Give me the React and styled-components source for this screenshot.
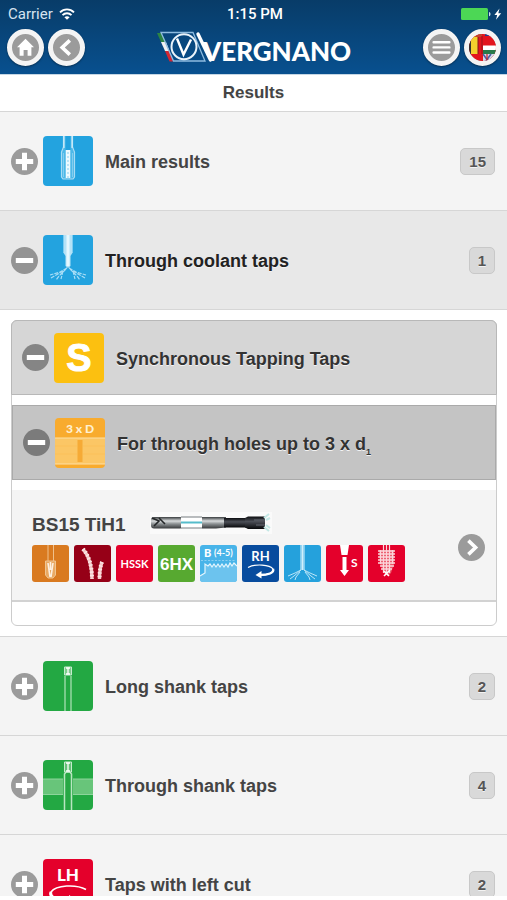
import React from 'react';
import styled, { createGlobalStyle } from 'styled-components';

const GlobalStyle = createGlobalStyle`
    * {
        box-sizing: border-box;
    }
    body {
        margin: 0;
        background: #fff;
        color: #444;
        font-family: "Liberation Sans", Arial, sans-serif;
        text-shadow: 0 1px 0 #f3f3f3;
    }
    button {
        font: inherit;
        color: inherit;
        text-shadow: inherit;
        cursor: pointer;
    }
`;

/* header icons */

const WifiIcon = () => (
  <svg width="16" height="12" viewBox="0 0 16 12" fill="none" stroke="#fff" strokeWidth="1.9" aria-hidden="true">
    <path d="M1 4.4 C5 .4 11 .4 15 4.4" />
    <path d="M3.5 7.1 C6 4.7 10 4.7 12.5 7.1" />
    <path d="M8 11.8 L5.4 9.2 C6.8 7.9 9.2 7.9 10.6 9.2 Z" fill="#fff" stroke="none" />
  </svg>
);

const BatteryIcon = () => (
  <svg width="42" height="14" viewBox="0 0 42 14" aria-hidden="true">
    <rect x="1" y="1" width="27" height="12" rx="1.5" fill="#4cd755" />
    <path d="M29 5 C31 5.4 31 8.8 29 9.2 Z" fill="#cfe0ee" />
    <path d="M39.5 1.5 L34.4 8 H37.2 L36 12.8 L41.2 6.2 H38.3 Z" fill="#fff" />
  </svg>
);

const HomeIcon = () => (
  <svg width="27" height="27" viewBox="0 0 27 27" fill="#fff" aria-hidden="true">
    <path d="M13.5 4.8 L22 13.2 H19.4 V21.8 H15.6 V16 H11.6 V21.8 H7.6 V13.2 H5 Z" />
  </svg>
);

const BackIcon = () => (
  <svg width="27" height="27" viewBox="0 0 27 27" fill="none" stroke="#fff" strokeWidth="3.6" aria-hidden="true">
    <path d="M16.8 6.4 L9.2 13.5 L16.8 20.6" />
  </svg>
);

const MenuIcon = () => (
  <svg width="27" height="27" viewBox="0 0 27 27" stroke="#fff" strokeWidth="2.4" strokeLinecap="round" aria-hidden="true">
    <path d="M5.6 8.3 H21.4 M5.6 13.4 H21.4 M5.6 18.5 H21.4" />
  </svg>
);

const FlagsIcon = () => (
  <svg width="27" height="27" viewBox="0 0 27 27" aria-hidden="true">
    <clipPath id="flags"><circle cx="13.5" cy="13.5" r="13.5" /></clipPath>
    <g clipPath="url(#flags)">
      <rect width="27" height="27" fill="#e3141d" />
      <rect width="2" height="27" fill="#333" />
      <rect x="2" y="2" width="7" height="18" fill="#f3cf2d" />
      <path d="M9 0 V20" stroke="#7e1a1c" />
      <path d="M3 0 H13 V3 H6 Z" fill="#c4422c" />
      <path d="M16 0 H27 V5 L22 2 L16 2 Z" fill="#1d3f94" />
      <path d="M13 2 V20" stroke="#a3131c" strokeWidth="1.2" />
      <rect x="14" y="11.500" width="13" height="4.500" fill="#fff" />
      <rect x="14" y="16" width="13" height="4" fill="#28794a" />
      <path d="M14 20 H27 V27 H14 Z" fill="#d5daea" />
      <path d="M14 20 L19 27 M22 20 L17 27" stroke="#4d5da8" strokeWidth="1.600" />
      <path d="M18 20 V27" stroke="#d21f26" strokeWidth="1.200" />
    </g>
  </svg>
);

const Logo = () => (
  <svg width="196" height="36" viewBox="0 0 196 36" role="img" aria-label="Vergnano">
    <path d="M1 3 H5.500 L10 12 H5 Z" fill="#2c8443" />
    <path d="M5 12 H10 L13.500 21 H9 Z" fill="#f2f2f2" />
    <path d="M9 21 H13.500 L17 31.500 H13.500 Z" fill="#d32632" />
    <path d="M5 2.500 H37 L49 31 H17.500 Z" fill="none" stroke="#8dbbdf" strokeWidth="1.300" />
    <circle cx="28" cy="16.700" r="12.500" fill="none" stroke="#eaf3fa" strokeWidth="2" />
    <path d="M21 8.500 L27.500 24.500 L35 9.500" fill="none" stroke="#fff" strokeWidth="2.400" />
    <path d="M42 4 L54.500 30" stroke="#fff" strokeWidth="3.400" strokeLinecap="round" />
    <text x="47" y="31" fill="#fff" fontFamily="Lato, sans-serif" fontSize="26" fontWeight="900">VERGNANO</text>
  </svg>
);

/* round toggles */

const PlusIcon = () => (
  <svg width="27" height="27" viewBox="0 0 27 27" aria-hidden="true">
    <circle cx="13.5" cy="13.5" r="13.5" fill="#9b9b9b" />
    <path d="M13.500 4.800 V22.200 M4.800 13.500 H22.200" stroke="#fff" strokeWidth="5" />
  </svg>
);

const MinusIcon = ({ fill = '#949494' }) => (
  <svg width="27" height="27" viewBox="0 0 27 27" aria-hidden="true">
    <circle cx="13.5" cy="13.5" r="13.5" fill={fill} />
    <path d="M4.800 13.500 H22.200" stroke="#fff" strokeWidth="5" />
  </svg>
);

const ArrowIcon = () => (
  <svg width="27" height="27" viewBox="0 0 27 27" aria-hidden="true">
    <circle cx="13.5" cy="13.5" r="13.5" fill="#9b9b9b" />
    <path d="M10.400 6.600 L17.600 13.500 L10.400 20.400" fill="none" stroke="#fff" strokeWidth="3.600" />
  </svg>
);

/* category pictures, 50 x 50 */

const MainTapArt = () => (
  <svg viewBox="0 0 50 50" fill="none" aria-hidden="true">
    <path d="M20.5 0 V11 L18.500 16 V41 L20 43 H30 L31.500 41 V16 L29.500 11 V0" fill="#4db8e8" stroke="#a9dcf4" strokeWidth="1.200" />
    <path d="M25 0 V14" stroke="#23a3df" strokeWidth="5" />
    <path d="M21 0 V12 M29 0 V12" stroke="#e3f5fc" />
    <path d="M25 14 V42" stroke="#eefaff" strokeWidth="4.500" />
    <path d="M25 16 V42" stroke="#a6daf3" strokeWidth="1.400" strokeDasharray="2 2" />
    <path d="M20.500 17 V41 M29.500 17 V41" stroke="#83cdef" />
  </svg>
);

const CoolantTapArt = () => (
  <svg viewBox="0 0 50 50" fill="none" aria-hidden="true">
    <path d="M20 0 H30 V17 L27.500 21 V31 L25 33 L22.500 31 V21 L20 17 Z" fill="#b4e2f7" />
    <path d="M25 0 V31" stroke="#e6f7fe" strokeWidth="3" />
    <path d="M20.500 0 V17 M29.500 0 V17" stroke="#7dccf0" />
    <path d="M24 33 L17 37 L7 40 M24 33 L15 39 L8 43 M23 34 L16 41 L13 45 M20 36 L18 44" stroke="#a8ddf6" strokeDasharray="4 1" strokeWidth="1.200" />
    <path d="M26 33 L33 37 L43 40 M26 33 L35 39 L42 43 M27 34 L34 41 L37 45 M30 36 L32 44" stroke="#a8ddf6" strokeDasharray="4 1" strokeWidth="1.200" />
  </svg>
);

const SyncArt = () => (
  <svg viewBox="0 0 50 50" aria-hidden="true">
    <text x="25" y="38" textAnchor="middle" fill="#fff" stroke="#fff" fontFamily="Liberation Sans, sans-serif" fontSize="38" fontWeight="700">S</text>
  </svg>
);

const DepthArt = () => (
  <svg viewBox="0 0 50 50" aria-hidden="true">
    <rect y="20" width="50" height="26" fill="#fbc665" />
    <path d="M0 20 H50 M0 46 H50" stroke="#fde0a6" />
    <rect x="22.500" y="22" width="5" height="22" fill="#f6aa35" />
    <path d="M0 28 H22 M28 28 H50 M0 36 H22 M28 36 H50" stroke="#fbc05a" />
    <text x="25" y="15" textAnchor="middle" fill="#fff0d2" fontFamily="Lato, sans-serif" fontSize="12" fontWeight="900">3 x D</text>
  </svg>
);

const LongShankArt = () => (
  <svg viewBox="0 0 50 50" fill="none" aria-hidden="true">
    <path d="M22 50 V15 M28 50 V15" stroke="#9ddaa9" strokeWidth="1.400" />
    <path d="M21.500 14 V6 H28.500 V14 Z" fill="#7ccb8b" stroke="#c6ebce" />
    <path d="M23 7 H27 M25 7 V13 M23 13 H27" stroke="#fff" strokeWidth="1.300" />
  </svg>
);

const ThroughShankArt = () => (
  <svg viewBox="0 0 50 50" fill="none" aria-hidden="true">
    <rect y="19" width="50" height="15.500" fill="#68c57a" />
    <path d="M0 19 H50 M0 34.500 H50" stroke="#8dd59b" />
    <rect x="20" y="12" width="10" height="38" fill="#27a844" />
    <path d="M21.500 50 V14 L23 12 H27 L28.500 14 V50" stroke="#b8e6c1" strokeWidth="1.500" />
    <path d="M21.500 12 V2 H28.500 V12 Z" fill="#63c076" stroke="#c6ebce" />
    <path d="M23 3 H27 M25 3 V11 M23 11 H27" stroke="#fff" strokeWidth="1.300" />
  </svg>
);

const LeftCutArt = () => (
  <svg viewBox="0 0 50 50" fill="none" aria-hidden="true">
    <text x="25" y="22" textAnchor="middle" fill="#fff" fontFamily="Lato, sans-serif" fontSize="17" fontWeight="900">LH</text>
    <path d="M43 30.500 C33 25 13 26 8 33 C6 38 14 42 27 42" stroke="#fff" strokeWidth="1.600" />
    <path d="M8 33 C6 38 14 42 27 42" stroke="#fff" strokeWidth="3" />
    <path d="M26 36 L35 42 L26 47 Z" fill="#fff" />
  </svg>
);

/* property pictures, 37 x 37 */

const MaterialArt = () => (
  <svg viewBox="0 0 37 37" fill="none" aria-hidden="true">
    <path d="M16 0 V16 M21.500 0 V16" stroke="#efc08b" />
    <path d="M13.500 16 H23.500 V30 L21 33 H16 L13.500 30 Z" fill="#e9a963" stroke="#f0c591" />
    <path d="M16 18 L18 32 M21 18 L19 32 M18.500 17 V25" stroke="#fdf0e0" strokeWidth="1.600" />
  </svg>
);

const ChipArt = () => (
  <svg viewBox="0 0 37 37" fill="none" aria-hidden="true">
    <path d="M9 4 C15 11 18 20 18 34 M28 17 C26 22 25.500 28 25.500 34" stroke="#f6c9c9" strokeWidth="3.400" />
    <path d="M9 4 C15 11 18 20 18 34 M28 17 C26 22 25.500 28 25.500 34" stroke="#fbe4e4" strokeWidth="4" strokeDasharray="1.500 2" />
  </svg>
);

const SteelArt = () => (
  <svg viewBox="0 0 37 37" aria-hidden="true">
    <text x="18.500" y="23" textAnchor="middle" fill="#fff" fontFamily="Lato, sans-serif" fontSize="11" fontWeight="700">HSSK</text>
  </svg>
);

const ToleranceArt = () => (
  <svg viewBox="0 0 37 37" aria-hidden="true">
    <text x="18.500" y="25" textAnchor="middle" fill="#fff" fontFamily="Liberation Sans, sans-serif" fontSize="17" fontWeight="700">6HX</text>
  </svg>
);

const ChamferArt = () => (
  <svg viewBox="0 0 37 37" aria-hidden="true">
    <path d="M0 37 V31 L5 28 V19 L8 21 L10 19 L12 22 L14 19 L16 22 L18 19 L20 22 L22 19 L24 22 L26 19 L28 22 L30 18 L32 21 L34 18 L37 21 V37 Z" fill="#6cc3ee" />
    <path d="M0 31 L5 28 V19 L8 21 L10 19 L12 22 L14 19 L16 22 L18 19 L20 22 L22 19 L24 22 L26 19 L28 22 L30 18 L32 21 L34 18 L37 21" fill="none" stroke="#e5f6fe" strokeWidth="1.200" />
    <path d="M1 15.500 H36" stroke="#8bd0f3" strokeDasharray="2 1.500" />
    <text x="4" y="12" fill="#fff" fontFamily="Lato, sans-serif" fontSize="11" fontWeight="900">B</text>
    <text x="14" y="11" fill="#fff" fontFamily="Lato, sans-serif" fontSize="9" fontWeight="700">(4-5)</text>
  </svg>
);

const RightHandArt = () => (
  <svg viewBox="0 0 37 37" fill="none" aria-hidden="true">
    <text x="18.500" y="16" textAnchor="middle" fill="#fff" fontFamily="Lato, sans-serif" fontSize="13" fontWeight="700">RH</text>
    <path d="M6 22.500 C13 18.500 28 19.500 31 24 C32 28 26 30 18 30" stroke="#fff" strokeWidth="1.200" />
    <path d="M31 24 C32.500 28 26 30 18 30" stroke="#fff" strokeWidth="2.400" />
    <path d="M19.500 26 L13.500 30 L19.500 33.500 Z" fill="#fff" />
  </svg>
);

const CoolantArt = () => (
  <svg viewBox="0 0 37 37" fill="none" aria-hidden="true">
    <path d="M18.500 0 V25" stroke="#7fcbee" strokeWidth="5" />
    <path d="M18.500 0 V25" stroke="#d0effb" strokeWidth="1.600" />
    <path d="M17 25 L11 28 L4 31 M17 25 L10 31 L6 34 M16 27 L12 32 L11 35" stroke="#b9e4f7" />
    <path d="M20 25 L26 28 L33 31 M20 25 L27 31 L31 34 M21 27 L25 32 L26 35" stroke="#b9e4f7" />
  </svg>
);

const SpeedArt = () => (
  <svg viewBox="0 0 37 37" fill="#fff" aria-hidden="true">
    <path d="M14 0 H23 L21.500 10 H15.500 Z" />
    <path d="M16.500 12 H20.500 V25 H23 L18.500 31 L14 25 H16.500 Z" />
    <text x="25" y="22" fontFamily="Lato, sans-serif" fontSize="12" fontWeight="700">S</text>
  </svg>
);

const ThreadArt = () => (
  <svg viewBox="0 0 37 37" fill="none" stroke="#fbd5da" aria-hidden="true">
    <path d="M11 5 H26 V19 L23 28 L20 31 L16 28 L12 19 Z" fill="#ec5568" stroke="none" />
    <path d="M15.500 0 V28 M18.500 0 V28 M21.500 0 V28 M12.500 5 V19 M24.500 5 V19" strokeWidth="1.200" />
    <path d="M10 6 H27 M10 9 H27 M10 12 H27 M10 15 H27 M10 18 H27 M12 21 H26 M13 24 H24" strokeWidth="1.300" />
    <path d="M16 26 L21 31 M22 25 L16 31" stroke="#fff" strokeWidth="1.600" />
  </svg>
);

const ToolPicture = () => (
  <svg width="122" height="22" viewBox="0 0 122 22" role="img" aria-label="BS15 TiH1 tap">
    <defs>
      <linearGradient id="steel" x1="0" y1="0" x2="0" y2="1">
        <stop offset="0" stopColor="#383c3e" />
        <stop offset=".35" stopColor="#d9dcdd" />
        <stop offset=".6" stopColor="#8b9092" />
        <stop offset="1" stopColor="#37393b" />
      </linearGradient>
      <linearGradient id="dark" x1="0" y1="0" x2="0" y2="1">
        <stop offset="0" stopColor="#0c0d10" />
        <stop offset=".4" stopColor="#4c4f57" />
        <stop offset="1" stopColor="#08090b" />
      </linearGradient>
    </defs>
    <rect width="122" height="22" fill="#fff" opacity=".5" />
    <rect x="1" y="5" width="32" height="11.500" rx="3" fill="url(#steel)" />
    <path d="M2 6 L9 9 L4 14 M9 6 L15 12" stroke="#25282a" strokeWidth="1.600" fill="none" />
    <rect x="31" y="5" width="21" height="11.500" fill="#fff" />
    <path d="M31 5 H52 M31 16 H52" stroke="#777d80" />
    <path d="M31 10.500 H52" stroke="#55bccb" strokeWidth="2" />
    <path d="M52 5 H76 V15.500 L66 16.500 H52 Z" fill="url(#steel)" />
    <rect x="74" y="6" width="22" height="9.500" fill="url(#dark)" />
    <path d="M95 6 L98 4.500 H115 V17 H98 L95 15.500 Z" fill="url(#dark)" />
    <path d="M104 8 H115 M106 13 H115" stroke="#676b75" />
    <path d="M114 6 L119 2 M114 15 L119 19 M116 8 L120 6 M116 13 L120 16" stroke="#c3e8e5" strokeWidth="2" />
  </svg>
);

const properties = [
  { name: 'Material', color: '#d97a20', Art: MaterialArt },
  { name: 'Chip', color: '#960017', Art: ChipArt },
  { name: 'HSSK', color: '#e4002b', Art: SteelArt },
  { name: '6HX', color: '#57a930', Art: ToleranceArt },
  { name: 'Chamfer B', color: '#48b4e9', Art: ChamferArt },
  { name: 'Right hand', color: '#084c9e', Art: RightHandArt },
  { name: 'Coolant', color: '#25a1dc', Art: CoolantArt },
  { name: 'Synchronous', color: '#e4002b', Art: SpeedArt },
  { name: 'Thread', color: '#e4002b', Art: ThreadArt },
];

const categoriesBelow = [
  { title: 'Long shank taps', count: 2, color: '#23a843', Art: LongShankArt },
  { title: 'Through shank taps', count: 4, color: '#23a843', Art: ThroughShankArt },
  { title: 'Taps with left cut', count: 2, color: '#e4002b', Art: LeftCutArt },
];

function Category({ title, count, color, Art, open }) {
  return (
    <CategoryButton type="button" aria-expanded={!!open} $open={open}>
      {open ? <MinusIcon /> : <PlusIcon />}
      <Tile $color={color}><Art /></Tile>
      <RowTitle>{title}</RowTitle>
      <Count>{count}</Count>
    </CategoryButton>
  );
}

function App() {
  return (
    <Page>
      <GlobalStyle />
      <Screen>
        <Header>
          <StatusBar>
            <Carrier>Carrier <WifiIcon /></Carrier>
            <Clock>1:15 PM</Clock>
            <Battery><BatteryIcon /></Battery>
          </StatusBar>
          <NavBar>
            <NavGroup>
              <RoundButton type="button" aria-label="Home"><HomeIcon /></RoundButton>
              <RoundButton type="button" aria-label="Back"><BackIcon /></RoundButton>
            </NavGroup>
            <Logo />
            <NavGroup>
              <RoundButton type="button" aria-label="Menu"><MenuIcon /></RoundButton>
              <RoundButton type="button" aria-label="Language"><FlagsIcon /></RoundButton>
            </NavGroup>
          </NavBar>
        </Header>
        <PageTitle>Results</PageTitle>
        <main>
          <Category title="Main results" count={15} color="#23a3df" Art={MainTapArt} />
          <Category title="Through coolant taps" count={1} color="#23a3df" Art={CoolantTapArt} open />
          <CategoryBody>
            <Group>
              <GroupButton type="button" aria-expanded="true">
                <MinusIcon fill="#858585" />
                <Tile $color="#fcc010"><SyncArt /></Tile>
                <RowTitle>Synchronous Tapping Taps</RowTitle>
              </GroupButton>
              <SubGroupButton type="button" aria-expanded="true">
                <MinusIcon fill="#7b7b7b" />
                <Tile $color="#f8ab2e"><DepthArt /></Tile>
                <RowTitle>For through holes up to 3 x d<sub>1</sub></RowTitle>
              </SubGroupButton>
              <Product href="#bs15-tih1">
                <ProductInfo>
                  <ProductHeading>
                    <ProductName>BS15 TiH1</ProductName>
                    <ToolPicture />
                  </ProductHeading>
                  <PropertyList>
                    {properties.map(({ name, color, Art }) => (
                      <PropertyTile key={name} $color={color}><Art /></PropertyTile>
                    ))}
                  </PropertyList>
                </ProductInfo>
                <ArrowIcon />
              </Product>
            </Group>
          </CategoryBody>
          {categoriesBelow.map((category) => (
            <Category key={category.title} {...category} />
          ))}
        </main>
      </Screen>
    </Page>
  );
}

export default App;

const Page = styled.div`
    height: 100vh;
    padding-bottom: 4px;
`;
const Screen = styled.div`
    height: 100%;
    overflow: hidden;
`;
const Header = styled.header`
    height: 74px;
    color: #fff;
    text-shadow: none;
    background: linear-gradient(#083c68, #08508f);
`;
const StatusBar = styled.div`
    display: grid;
    grid-template-columns: 1fr auto 1fr;
    align-items: center;
    height: 28px;
    padding: 0 5px 0 8px;
    font-family: Roboto, sans-serif;
    font-size: 15px;
`;
const Carrier = styled.span`
    display: flex;
    align-items: center;
    gap: 6px;
    color: #d5e3ef;
`;
const Clock = styled.span`
    font-weight: 500;
`;
const Battery = styled.span`
    display: flex;
    justify-content: flex-end;
`;
const NavBar = styled.nav`
    display: flex;
    align-items: center;
    justify-content: space-between;
    height: 39px;
    padding: 0 6px 0 7px;
`;
const NavGroup = styled.div`
    display: flex;
    gap: 4px;
`;
const RoundButton = styled.button`
    display: flex;
    align-items: center;
    justify-content: center;
    width: 37px;
    height: 37px;
    padding: 0;
    border: 5px solid #f4f4f4;
    border-radius: 50%;
    background: #9b9b9b;
    box-shadow: 0 1px 2px rgba(0, 0, 0, 0.4);
    svg {
        flex: none;
    }
`;
const PageTitle = styled.h1`
    margin: 0;
    border-top: 1px solid #c5d6e4;
    font-size: 17px;
    line-height: 36px;
    text-align: center;
`;
const CategoryButton = styled.button`
    display: flex;
    align-items: center;
    width: 100%;
    height: 99px;
    padding: 0 12px 0 11px;
    border: 0;
    border-top: 1px solid #d6d6d6;
    background: ${({ $open }) => ($open ? '#e8e8e8' : '#f4f4f4')};
    color: ${({ $open }) => ($open ? '#222' : '#444')};
    font-weight: bold;
    text-align: left;
`;
const Tile = styled.span`
    flex: none;
    width: 50px;
    height: 50px;
    margin: 0 12px 0 5px;
    border-radius: 4px;
    overflow: hidden;
    background: ${({ $color }) => $color};
    text-shadow: none;
    svg {
        display: block;
    }
`;
const RowTitle = styled.span`
    flex: 1;
    padding-top: 2px;
    font-size: 18px;
    line-height: 24px;
    sub {
        font-size: 9px;
        line-height: 0;
    }
`;
const Count = styled.span`
    padding: 0 8px;
    border: 1px solid #c8c8c8;
    border-radius: 5px;
    background: #d9d9d9;
    color: #555;
    font-size: 15px;
    line-height: 25px;
`;
const CategoryBody = styled.div`
    padding: 10px 10px 10px 11px;
    border-top: 1px solid #d6d6d6;
`;
const Group = styled.div`
    padding-bottom: 23px;
    border: 1px solid #ccc;
    border-radius: 6px;
`;
const GroupButton = styled.button`
    display: flex;
    align-items: center;
    width: calc(100% + 2px);
    height: 75px;
    margin: -1px -1px 10px;
    padding: 0 10px;
    border: 1px solid #b8b8b8;
    border-radius: 6px 6px 0 0;
    background: #d6d6d6;
    color: #333;
    font-weight: bold;
    text-align: left;
`;
const SubGroupButton = styled(GroupButton)`
    width: 100%;
    margin: 0 0 10px;
    border-color: #aaa;
    border-radius: 0;
    background: #c4c4c4;
`;
const Product = styled.a`
    display: flex;
    align-items: center;
    justify-content: space-between;
    padding: 22px 11px 18px 20px;
    border-bottom: 2px solid #d2d2d2;
    background: #f4f4f4;
    color: inherit;
    text-decoration: none;
`;
const ProductInfo = styled.div`
    display: flex;
    flex-direction: column;
    gap: 11px;
`;
const ProductHeading = styled.div`
    display: flex;
    align-items: center;
    gap: 24px;
    height: 22px;
`;
const ProductName = styled.h2`
    margin: 0;
    padding-top: 4px;
    font-size: 19px;
    line-height: 22px;
`;
const PropertyList = styled.div`
    display: flex;
    gap: 5px;
`;
const PropertyTile = styled.span`
    width: 37px;
    height: 37px;
    border-radius: 3px;
    overflow: hidden;
    background: ${({ $color }) => $color};
    text-shadow: none;
    svg {
        display: block;
    }
`;
